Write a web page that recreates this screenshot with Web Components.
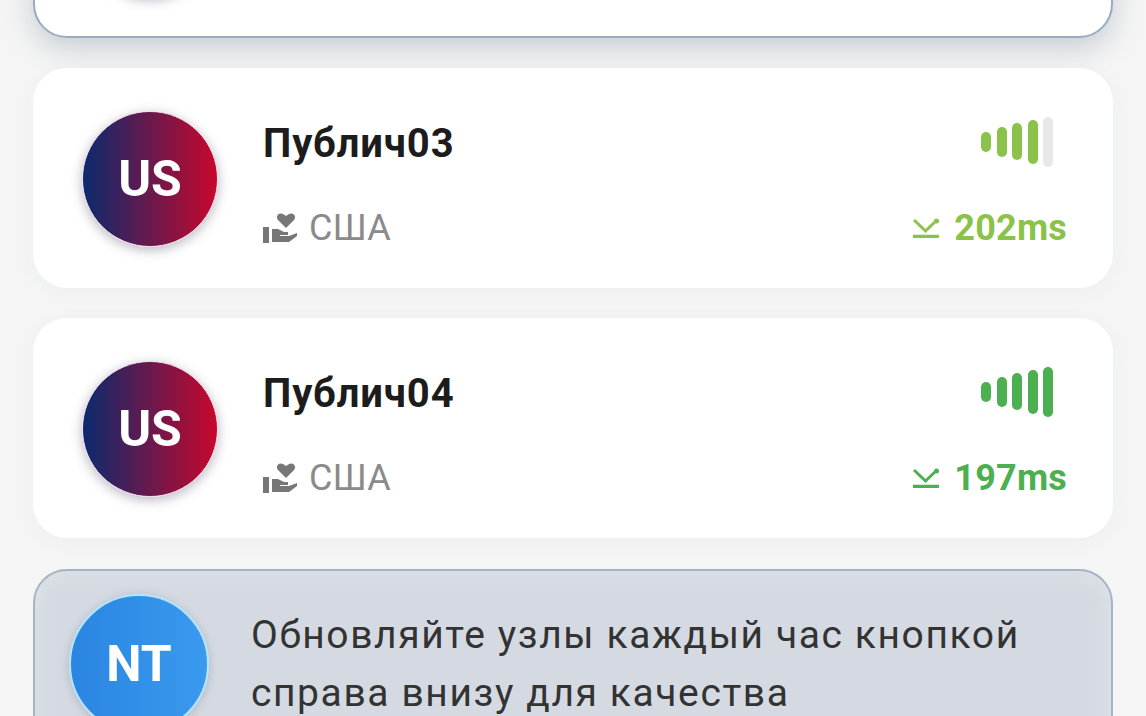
<!DOCTYPE html>
<html>
<head>
<meta charset="utf-8">
<style>
html,body{margin:0;height:716px;overflow:hidden;background:#f5f5f5;}
body{font-family:Roboto,"Liberation Sans",sans-serif;}
</style>
</head>
<body>
<node-list>
  <node-card selected level="4" color="#8bc34a"></node-card>
  <node-card name="Публич03" country="США" ping="202ms" level="4" color="#8bc34a"></node-card>
  <node-card name="Публич04" country="США" ping="197ms" level="5" color="#4caf50"></node-card>
  <notice-card code="NT">Обновляйте узлы каждый час кнопкой справа внизу для качества</notice-card>
</node-list>

<script>
//list column, scrolled so the first card is cut off at the top
class NodeList extends HTMLElement {
  constructor() {
    super();
    this.attachShadow({ mode: "open" }).innerHTML = `
<style>
:host{display:flex;flex-direction:column;gap:30px;padding:0 33px;margin-top:-182px;}
</style>
<slot></slot>`;
  }
}

//five bars, level says how many are lit
class SignalBars extends HTMLElement {
  connectedCallback() {
    const level = Number(this.getAttribute("level"));
    const color = this.getAttribute("color");
    const heights = [20, 30, 37, 44, 50];
    const bars = heights.map((h, i) =>
      `<i style="height:${h}px;background:${i < level ? color : "#e8e8e8"}"></i>`).join("");
    this.attachShadow({ mode: "open" }).innerHTML = `
<style>
:host{display:flex;align-items:center;gap:5.5px;height:50px;}
i{display:block;width:10px;border-radius:5px;}
</style>
${bars}`;
  }
}
customElements.define("signal-bars", SignalBars);

//one server row
class NodeCard extends HTMLElement {
  connectedCallback() {
    const name = this.getAttribute("name") || "";
    const country = this.getAttribute("country") || "";
    const ping = this.getAttribute("ping") || "";
    const level = this.getAttribute("level");
    const color = this.getAttribute("color");
    this.attachShadow({ mode: "open" }).innerHTML = `
<style>
:host{display:flex;align-items:center;box-sizing:border-box;height:220px;flex:none;
  padding:0 46px 0 49px;gap:45px;background:#fff;border-radius:34px;
  box-shadow:0 4px 20px rgba(60,70,90,.04);}
:host([selected]){border:2px solid #9aabbd;padding:0 44px 0 47px;box-shadow:0 10px 30px rgba(90,110,135,.3);}
.flag{width:134px;height:134px;flex:none;border-radius:50%;display:flex;align-items:center;justify-content:center;
  color:#fff;font-size:50px;font-weight:700;margin-top:1px;
  background:linear-gradient(90deg,#0a2a6e,#c8082c);border:1px solid #f3d8e6;
  box-shadow:0 3px 12px rgba(50,50,80,.35);}
.body{flex:1;display:flex;flex-direction:column;gap:31px;padding-top:14px;}
.row{display:flex;justify-content:space-between;align-items:center;height:54px;}
.name{font-size:40px;font-weight:700;color:#1c1c1c;letter-spacing:.85px;margin-top:2px;}
signal-bars{margin-right:14px;margin-top:-2px;}
.country{display:flex;align-items:center;gap:12px;font-size:36px;color:#8a8a8a;letter-spacing:.3px;}
.ping{display:flex;align-items:center;gap:14px;font-size:36px;font-weight:700;color:${color};letter-spacing:.2px;}
svg{display:block;}
</style>
<div class="flag">${name ? "US" : ""}</div>
<div class="body">
  <div class="row"><span class="name">${name}</span><signal-bars level="${level}" color="${color}"></signal-bars></div>
  <div class="row">
    <span class="country">
      <svg width="34" height="30" viewBox="0 0 34 30" fill="#777">
        <path d="M0 14h6v16H0z"/>
        <path d="M9 16h6l6 3h4v3h-8v1h9l8-3v3l-8 6H9z"/>
        <path d="M23 15 15 7C12 3 16-1 20 1l3 2 3-2c4-2 8 2 5 6z"/>
      </svg>
      ${country}
    </span>
    <span class="ping">
      <svg width="28" height="20" viewBox="0 0 28 20" fill="none" stroke="${color}" stroke-width="3">
        <path d="M1 18.500h26" stroke-width="3.500"/>
        <path d="M2 2 13.500 13 24 3"/>
        <circle cx="24.500" cy="3" r="2.500" fill="${color}" stroke="none"/>
      </svg>
      ${ping}
    </span>
  </div>
</div>`;
  }
}
customElements.define("node-card", NodeCard);

//grey tip card at the bottom
class NoticeCard extends HTMLElement {
  connectedCallback() {
    const code = this.getAttribute("code");
    this.attachShadow({ mode: "open" }).innerHTML = `
<style>
:host{display:flex;align-items:flex-start;flex:none;box-sizing:border-box;padding:23px 30px 40px 34px;gap:42px;
  background:#d5dae2;border:2px solid #a5b4c5;border-radius:34px;margin-top:1px;
  box-shadow:inset 0 0 24px rgba(255,255,255,.25);}
.badge{width:136px;height:136px;flex:none;border-radius:50%;display:flex;align-items:center;justify-content:center;
  color:#fff;font-size:50px;font-weight:700;background:linear-gradient(90deg,#2a85e0,#3a9aef);
  border:2px solid #b5e4fb;box-shadow:0 2px 10px rgba(50,80,120,.25);}
.text{font-size:39px;line-height:58px;letter-spacing:1.6px;color:#333;padding-top:12px;}
</style>
<div class="badge">${code}</div>
<div class="text"><slot></slot></div>`;
  }
}
customElements.define("notice-card", NoticeCard);
customElements.define("node-list", NodeList);
</script>
</body>
</html>
